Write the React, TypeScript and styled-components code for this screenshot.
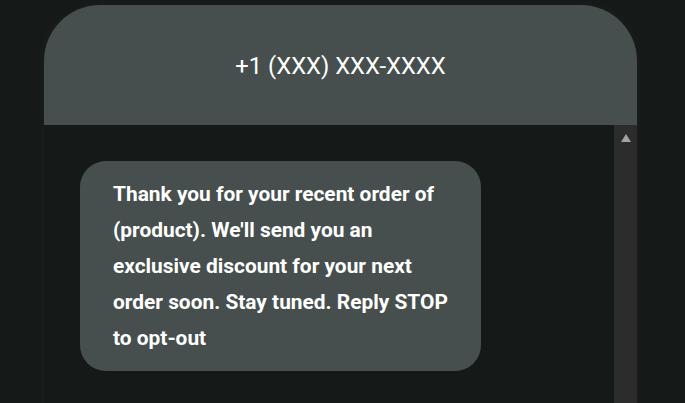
import React from "react";
import styled, { createGlobalStyle } from "styled-components";

const Global = createGlobalStyle`
  html, body {
    margin: 0;
    padding: 0;
    background: #151918;
    overflow: hidden;
  }
  body {
    font-family: Roboto, "Liberation Sans", sans-serif;
  }
`;

const Page = styled.div`
  width: 685px;
  height: 403px;
  padding: 5px 0 0 44px;
  box-sizing: border-box;
  overflow: hidden;
  background: #151918;
`;

const Phone = styled.div`
  width: 593px;
  height: 420px;
  display: flex;
  flex-direction: column;
  border-radius: 56px 56px 0 0;
  background: #151918;
  box-shadow: 0 0 12px rgba(255, 255, 255, 0.035);
`;

const Header = styled.header`
  height: 120px;
  flex: none;
  display: flex;
  align-items: center;
  justify-content: center;
  background: #464f4d;
  border-radius: 56px 56px 0 0;
  color: #ffffff;
  font-size: 23.8px;
  font-weight: 400;
  padding-top: 2px;
  box-sizing: border-box;
`;

const Body = styled.div`
  flex: 1;
  display: flex;
`;

const Messages = styled.div`
  flex: 1;
  padding: 36px 0 0 36px;
`;

const Bubble = styled.div`
  width: 401px;
  box-sizing: border-box;
  padding: 15px 25px 15px 33px;
  background: #464f4d;
  border-radius: 26px;
  color: #ffffff;
  font-size: 20.9px;
  font-weight: 700;
  line-height: 36px;
`;

const Scrollbar = styled.div`
  width: 23px;
  flex: none;
  background: #2c2c2c;
  display: flex;
  justify-content: center;
  padding-top: 9px;
  box-sizing: border-box;
`;

const Arrow = styled.div`
  width: 0;
  height: 0;
  border-left: 5.5px solid transparent;
  border-right: 5.5px solid transparent;
  border-bottom: 8px solid #a3a3a3;
`;

export default function App() {
  return (
    <>
      <Global />
      <Page>
        <Phone>
          <Header>+1 (XXX) XXX-XXXX</Header>
          <Body>
            <Messages>
              <Bubble>
                Thank you for your recent order of (product). We'll send you an
                exclusive discount for your next order soon. Stay tuned. Reply
                STOP to opt-out
              </Bubble>
            </Messages>
            <Scrollbar>
              <Arrow />
            </Scrollbar>
          </Body>
        </Phone>
      </Page>
    </>
  );
}
